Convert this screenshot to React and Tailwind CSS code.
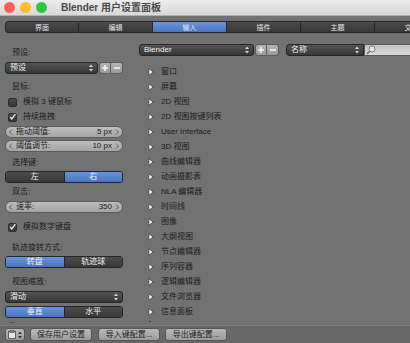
import React from 'react';

const FONT = { fontFamily: '"Liberation Sans", "Noto Sans CJK SC", sans-serif' };

const UpDown = () => (
  <svg width="4" height="8" viewBox="0 0 4 8" className="shrink-0">
    <path d="M0 3 L2 0.5 L4 3 Z" fill="#d8d8d8" />
    <path d="M0 5 L2 7.5 L4 5 Z" fill="#d8d8d8" />
  </svg>
);

const Dropdown = ({ label, className = '' }) => (
  <div className={`h-[12px] flex items-center justify-between pl-[4px] pr-[4px] rounded-[3px] border border-[#262626] bg-gradient-to-b from-[#545454] to-[#373737] text-[#f0f0f0] text-[8px] leading-none ${className}`}>
    <span>{label}</span>
    <UpDown />
  </div>
);

const PlusMinus = () => (
  <div className="flex h-[12px] ml-[1px]">
    <div className="w-[12px] h-[12px] rounded-l-[3px] border border-[#5a5a5a] bg-gradient-to-b from-[#b4b4b4] to-[#9a9a9a] flex items-center justify-center">
      <svg width="8" height="8" viewBox="0 0 8 8"><path d="M4 1 V7 M1 4 H7" stroke="#f4f4f4" strokeWidth="1.6" /></svg>
    </div>
    <div className="w-[12px] h-[12px] rounded-r-[3px] border border-l-0 border-[#5a5a5a] bg-gradient-to-b from-[#b4b4b4] to-[#9a9a9a] flex items-center justify-center">
      <svg width="8" height="8" viewBox="0 0 8 8"><path d="M1 4 H7" stroke="#f4f4f4" strokeWidth="1.6" /></svg>
    </div>
  </div>
);

const Slider = ({ label, value, className = '' }) => (
  <div className={`h-[12px] flex items-center rounded-full border border-[#5c5c5c] bg-gradient-to-b from-[#bdbdbd] to-[#a4a4a4] text-[#1a1a1a] text-[8px] leading-none px-[3px] ${className}`}>
    <svg width="4" height="6" viewBox="0 0 4 6"><path d="M3 0.5 L0.5 3 L3 5.5" stroke="#555" fill="none" strokeWidth="0.9" /></svg>
    <span className="ml-[3px]">{label}</span>
    <span className="ml-auto mr-[3px]">{value}</span>
    <svg width="4" height="6" viewBox="0 0 4 6"><path d="M1 0.5 L3.5 3 L1 5.5" stroke="#555" fill="none" strokeWidth="0.9" /></svg>
  </div>
);

const Toggle = ({ left, right, active, className = '' }) => (
  <div className={`h-[12px] flex rounded-[3px] border border-[#262626] overflow-hidden text-[8px] leading-none text-[#f0f0f0] ${className}`}>
    <div className={`flex-1 flex items-center justify-center ${active === 0 ? 'bg-gradient-to-b from-[#6a95dc] to-[#4a74bd]' : 'bg-gradient-to-b from-[#4c4c4c] to-[#383838]'}`}>{left}</div>
    <div className="w-[1px] bg-[#262626]" />
    <div className={`flex-1 flex items-center justify-center ${active === 1 ? 'bg-gradient-to-b from-[#6a95dc] to-[#4a74bd]' : 'bg-gradient-to-b from-[#4c4c4c] to-[#383838]'}`}>{right}</div>
  </div>
);

const Check = ({ label, checked, className = '' }) => (
  <div className={`h-[10px] flex items-center text-[8px] leading-none text-[#1c1c1c] ${className}`}>
    <div className="w-[9px] h-[9px] ml-[3px] rounded-[2px] border border-[#2e2e2e] bg-gradient-to-b from-[#4a4a4a] to-[#363636] flex items-center justify-center">
      {checked && (
        <svg width="8" height="8" viewBox="0 0 8 8"><path d="M1.3 4 L3.2 6.2 L7.2 0.8" stroke="#f2f2f2" fill="none" strokeWidth="1.4" /></svg>
      )}
    </div>
    <span className="ml-[6px]">{label}</span>
  </div>
);

const Label = ({ children, className = '' }) => (
  <div className={`h-[10px] flex items-center pl-[7px] text-[8px] leading-none text-[#1c1c1c] ${className}`}>{children}</div>
);

const Triangle = () => (
  <svg width="6" height="8" viewBox="0 0 6 8" className="shrink-0">
    <path d="M0.8 0.8 L5.2 4 L0.8 7.2 Z" fill="#f2f2f2" stroke="#3a3a3a" strokeWidth="0.7" />
  </svg>
);

const ITEMS = [
  '窗口', '屏幕', '2D 视图', '2D 视图按键列表', 'User Interface', '3D 视图', '曲线编辑器',
  '动画摄影表', 'NLA 编辑器', '时间线', '图像', '大纲视图', '节点编辑器', '序列容器',
  '逻辑编辑器', '文件浏览器', '信息面板',
];

const TABS = ['界面', '编辑', '输入', '插件', '主题', '文件'];

const LightButton = ({ children, className = '' }) => (
  <div className={`h-[13px] flex items-center justify-center rounded-[3px] border border-[#555] bg-gradient-to-b from-[#b8b8b8] to-[#9c9c9c] text-[8px] leading-none text-[#1c1c1c] ${className}`}>
    {children}
  </div>
);

export default function App() {
  return (
    <div className="w-[410px] h-[343px] overflow-hidden flex flex-col bg-[#727272]" style={FONT}>
      {/* title bar */}
      <div className="h-[16px] shrink-0 flex items-center bg-gradient-to-b from-[#ececec] to-[#d8d8d8] border-b border-[#b0b0b0]">
        <div className="flex items-center gap-[5px] ml-[4px]">
          <div className="w-[11px] h-[11px] rounded-full bg-[#fc5f57]" />
          <div className="w-[11px] h-[11px] rounded-full bg-[#fdbc2e]" />
          <div className="w-[11px] h-[11px] rounded-full bg-[#28c840]" />
        </div>
        <span className="ml-[14px] text-[10px] font-bold text-[#4a4a4a] leading-none">Blender 用户设置面板</span>
      </div>

      {/* tabs */}
      <div className="flex mt-[5px] ml-[5px] h-[12px] shrink-0">
        {TABS.map((t, i) => (
          <div
            key={t}
            className={`w-[74px] shrink-0 flex items-center justify-center text-[7px] leading-none text-[#e8e8e8] border-y border-[#262626] border-r ${i === 0 ? 'border-l rounded-l-[3px]' : ''} ${i === 2 ? 'bg-gradient-to-b from-[#6a95dc] to-[#4a74bd]' : 'bg-gradient-to-b from-[#4a4a4a] to-[#383838]'}`}
          >
            {t}
          </div>
        ))}
      </div>

      {/* content */}
      <div className="flex flex-1 min-h-0">
        <div className="w-[118px] ml-[5px] shrink-0 flex flex-col">
          <Label className="mt-[15px]">预设:</Label>
          <div className="flex mt-[4px]">
            <Dropdown label="预设" className="flex-1" />
            <PlusMinus />
          </div>
          <Label className="mt-[8px]">鼠标:</Label>
          <Check className="mt-[5px]" label="模拟 3 键鼠标" />
          <Check className="mt-[5px]" label="持续拖拽" checked />
          <Slider className="mt-[4px]" label="拖动阈值:" value="5 px" />
          <Slider className="mt-[2px]" label="阈值调节:" value="10 px" />
          <Label className="mt-[6px]">选择键:</Label>
          <Toggle className="mt-[3px]" left="左" right="右" active={1} />
          <Label className="mt-[4px]">双击:</Label>
          <Slider className="mt-[4px]" label="速率:" value="350" />
          <Check className="mt-[9px]" label="模拟数字键盘" checked />
          <Label className="mt-[11px]">轨迹旋转方式:</Label>
          <Toggle className="mt-[3px]" left="转盘" right="轨迹球" active={0} />
          <Label className="mt-[9px]">视图缩放:</Label>
          <Dropdown className="mt-[4px]" label="滑动" />
          <Toggle className="mt-[3px]" left="垂直" right="水平" active={0} />
          <div className="mt-[4px] ml-[5px] w-[5px] h-[1px] bg-[#555]" />
        </div>

        <div className="flex-1 ml-[16px] flex flex-col min-w-0">
          <div className="flex mt-[11px] h-[12px]">
            <Dropdown label="Blender" className="w-[115px] shrink-0" />
            <PlusMinus />
            <Dropdown label="名称" className="w-[78px] shrink-0 ml-[7px] rounded-r-none" />
            <div className="flex-1 h-[12px] flex items-center border border-[#5a5a5a] border-r-0 bg-gradient-to-b from-[#c4c4c4] to-[#d8d8d8]">
              <svg width="10" height="10" viewBox="0 0 10 10" className="ml-[1px]">
                <circle cx="6" cy="4" r="3" fill="#e6e6e6" stroke="#777" strokeWidth="0.9" />
                <path d="M3.8 6.2 L1 9" stroke="#b0602a" strokeWidth="1.6" />
              </svg>
            </div>
          </div>
          <div className="mt-[8px] flex flex-col">
            {ITEMS.map((it) => (
              <div key={it} className="h-[15px] flex items-center">
                <div className="ml-[9px]"><Triangle /></div>
                <span className="ml-[7px] text-[8px] leading-none text-[#1c1c1c]">{it}</span>
              </div>
            ))}
            <div className="ml-[10px] mt-[2px] w-[2px] h-[1px] bg-[#444]" />
          </div>
        </div>
      </div>

      {/* bottom bar */}
      <div className="h-[18px] shrink-0 flex items-center border-t border-[#7c7c7c] bg-[#686868]">
        <div className="ml-[5px] w-[20px] h-[13px] flex items-center justify-center gap-[2px] rounded-[3px] border border-[#555] bg-gradient-to-b from-[#b8b8b8] to-[#9c9c9c]">
          <svg width="8" height="9" viewBox="0 0 8 9">
            <rect x="0.5" y="1.5" width="7" height="7" fill="#e4e4e4" stroke="#444" strokeWidth="0.8" />
            <rect x="2" y="0.5" width="4" height="2" fill="#888" stroke="#444" strokeWidth="0.6" />
          </svg>
          <svg width="4" height="8" viewBox="0 0 4 8">
            <path d="M0 3 L2 0.5 L4 3 Z" fill="#333" />
            <path d="M0 5 L2 7.5 L4 5 Z" fill="#333" />
          </svg>
        </div>
        <LightButton className="ml-[5px] w-[62px]">保存用户设置</LightButton>
        <LightButton className="ml-[6px] w-[62px]">导入键配置...</LightButton>
        <LightButton className="ml-[5px] w-[62px]">导出键配置...</LightButton>
      </div>
    </div>
  );
}
